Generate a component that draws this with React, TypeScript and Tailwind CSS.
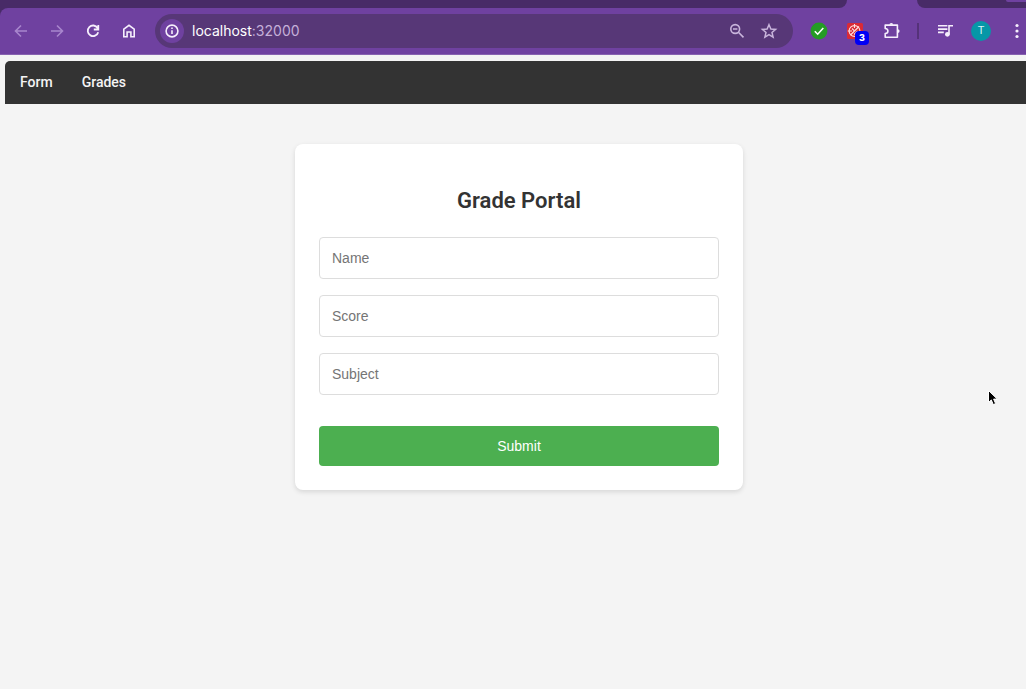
import type { ReactNode } from "react";

type IconProps = { children: ReactNode; className?: string };

function Icon({ children, className = "" }: IconProps) {
  return (
    <svg
      viewBox="0 0 18 18"
      className={`block size-[18px] ${className}`}
      fill="none"
      stroke="currentColor"
      strokeWidth="1.6"
      aria-hidden="true"
    >
      {children}
    </svg>
  );
}

function ToolbarButton({ label, children, className = "" }: IconProps & { label: string }) {
  return (
    <button type="button" aria-label={label} className={`shrink-0 ${className}`}>
      {children}
    </button>
  );
}

function TabStrip() {
  return (
    <div className="flex h-2 bg-[#6f41a0]">
      <div className="flex-1 rounded-br-lg bg-[#482b67]" />
      <div className="w-[70px]" />
      <div className="flex w-[109px] justify-end overflow-hidden rounded-bl-lg bg-[#482b67]">
        <div className="h-0.5 w-5 rounded-bl-lg bg-[#6f41a0]" />
      </div>
    </div>
  );
}

function Toolbar() {
  return (
    <div className="flex h-[47px] items-center rounded-tl-lg border-b border-[#8762b0] bg-[#6f41a0] pl-3 text-[#f6effc]">
      <div className="flex shrink-0 gap-[18px]">
        <ToolbarButton label="Back" className="text-[#a886cd]">
          <Icon>
            <path d="M15 9H4M9 3.500L3.500 9L9 14.500" />
          </Icon>
        </ToolbarButton>
        <ToolbarButton label="Forward" className="text-[#a886cd]">
          <Icon>
            <path d="M3 9h11M9 3.500l5.500 5.500L9 14.500" />
          </Icon>
        </ToolbarButton>
        <ToolbarButton label="Reload">
          <Icon className="[stroke-width:1.8]">
            <path d="M13.600 6A5.300 5.300 0 1 0 14.200 10.200M14.300 3v4.500H9.800" />
          </Icon>
        </ToolbarButton>
        <ToolbarButton label="Home">
          <Icon>
            <path d="M3.800 14.700V7.200L9 3.300l5.200 3.900v7.500h-3.300V10H7.100v4.700z" />
          </Icon>
        </ToolbarButton>
      </div>

      <div className="ml-[17px] flex h-[34px] min-w-0 flex-1 items-center rounded-full bg-[#573777] pr-[15px] pl-[5px]">
        <ToolbarButton label="Site information" className="rounded-full bg-[#6f41a0] p-[3px]">
          <Icon>
            <circle cx="9" cy="9" r="5.900" />
            <path d="M9 8.200v3.800M9 5.500v1.500" />
          </Icon>
        </ToolbarButton>
        <div className="ml-2 flex-1 truncate font-['Inter',sans-serif] text-sm text-[#c5afd9]">
          <span className="text-white">localhost</span>:32000
        </div>
        <div className="flex gap-3.5 text-[#c9b5dc]">
          <ToolbarButton label="Zoom">
            <Icon>
              <circle cx="7.200" cy="7" r="4.400" />
              <path d="M5 7h4.400M10.400 10.300L15.500 15.400" />
            </Icon>
          </ToolbarButton>
          <ToolbarButton label="Bookmark this page">
            <Icon className="[stroke-width:1.5]">
              <path d="M9 2.700l1.900 4.300 4.700.4-3.600 3.100 1.100 4.600L9 12.700 4.900 15.100l1.100-4.600-3.600-3.100 4.700-.4z" />
            </Icon>
          </ToolbarButton>
        </div>
      </div>

      <div className="flex shrink-0 items-center pl-[17px]">
        <ToolbarButton label="Status extension">
          <Icon>
            <circle cx="9" cy="9" r="8.400" fill="#249c24" stroke="none" />
            <path d="M4.800 9.200l2.900 3 5.600-6.200" stroke="white" strokeWidth="1.600" />
          </Icon>
        </ToolbarButton>
        <ToolbarButton label="Tracker blocker, 3 items" className="relative ml-[18px]">
          <Icon>
            <rect x="1" y="1" width="16" height="16" rx="1.500" fill="#da2a36" stroke="none" />
            <g stroke="#ffdede" strokeWidth="1.100">
              <circle cx="8.500" cy="9" r="5.400" />
              <path d="M8.500 2v4M1.800 9h4.200M4.500 13L13 4.500M6 6.500l2 2M8 12.500L11.500 9" />
            </g>
          </Icon>
          <span className="absolute top-[9px] left-[9px] flex h-3.5 w-3.5 items-center justify-center rounded bg-[#0000f5] font-['Inter',sans-serif] text-[9px] font-extrabold text-white">
            3
          </span>
        </ToolbarButton>
        <ToolbarButton label="Extensions" className="ml-[19px]">
          <Icon>
            <path d="M2.200 3.100H14.400V15.200H2.200V11.600C5.800 11.400 5.800 6.700 2.200 6.500z" strokeLinejoin="round" />
            <path d="M6.400 2.800a1.900 1.900 0 0 1 3.800 0zM14.700 7.200a1.900 1.900 0 0 1 0 3.800z" fill="currentColor" stroke="none" />
          </Icon>
        </ToolbarButton>
        <span className="ml-4 h-4 w-0.5 bg-[#553279]" />
        <ToolbarButton label="Media controls" className="ml-[17px]">
          <Icon>
            <path d="M2 3.800h9.400M2 7.100h9.400M2 10.400h5.800M13 12V3.800h4" />
            <circle cx="11.400" cy="12.300" r="2.400" fill="currentColor" stroke="none" />
          </Icon>
        </ToolbarButton>
        <button
          type="button"
          aria-label="Profile"
          className="ml-[17px] size-5 rounded-full bg-[#0797a7] font-['Roboto',sans-serif] text-[11px] text-[#d8f5f7]"
        >
          T
        </button>
        <ToolbarButton label="Browser menu" className="ml-[17px]">
          <Icon>
            <g fill="currentColor" stroke="none">
              <circle cx="9" cy="3.500" r="1.600" />
              <circle cx="9" cy="9" r="1.600" />
              <circle cx="9" cy="14.500" r="1.600" />
            </g>
          </Icon>
        </ToolbarButton>
      </div>
    </div>
  );
}

function Field({ label }: { label: string }) {
  return (
    <input
      type="text"
      aria-label={label}
      placeholder={label}
      className="block h-[42px] w-full rounded border border-[#dddddd] bg-white px-3 font-['Liberation_Sans',sans-serif] text-sm text-[#333333] placeholder:text-[#757575]"
    />
  );
}

export default function App() {
  return (
    <div className="flex min-h-screen flex-col overflow-hidden bg-[#f4f4f4] font-['Roboto',sans-serif]">
      <header className="bg-[#482b67]">
        <TabStrip />
        <Toolbar />
      </header>

      <nav className="mt-1.5 ml-[5px] flex gap-[29px] rounded-tl-[5px] bg-[#333333] px-[15px] pt-[11px] pb-3 text-sm leading-5 font-medium text-[#f4f4f4]">
        <a href="#form">Form</a>
        <a href="#grades">Grades</a>
      </nav>

      <main className="pt-10 pb-6 pl-3">
        <form
          className="mx-auto w-full max-w-md rounded-lg bg-white p-6 shadow-[0_2px_5px_rgba(0,0,0,0.12)]"
          onSubmit={(event) => event.preventDefault()}
        >
          <h1 className="mt-4 mb-5 text-center text-[22px] leading-[33px] font-semibold text-[#333333]">
            Grade Portal
          </h1>
          <div className="flex flex-col gap-4">
            <Field label="Name" />
            <Field label="Score" />
            <Field label="Subject" />
          </div>
          <button
            type="submit"
            className="mt-[31px] h-10 w-full rounded bg-[#4caf50] font-['Liberation_Sans',sans-serif] text-sm text-white"
          >
            Submit
          </button>
        </form>
      </main>

      <svg
        viewBox="0 0 12 18"
        className="pointer-events-none absolute top-[389px] left-[987px] h-[18px] w-3"
        aria-hidden="true"
      >
        <path
          d="M1.500 1.500v12l2.800-2.600 2 4.700 2.300-1-2-4.500h3.700z"
          fill="black"
          stroke="white"
          strokeWidth="1"
        />
      </svg>
    </div>
  );
}
